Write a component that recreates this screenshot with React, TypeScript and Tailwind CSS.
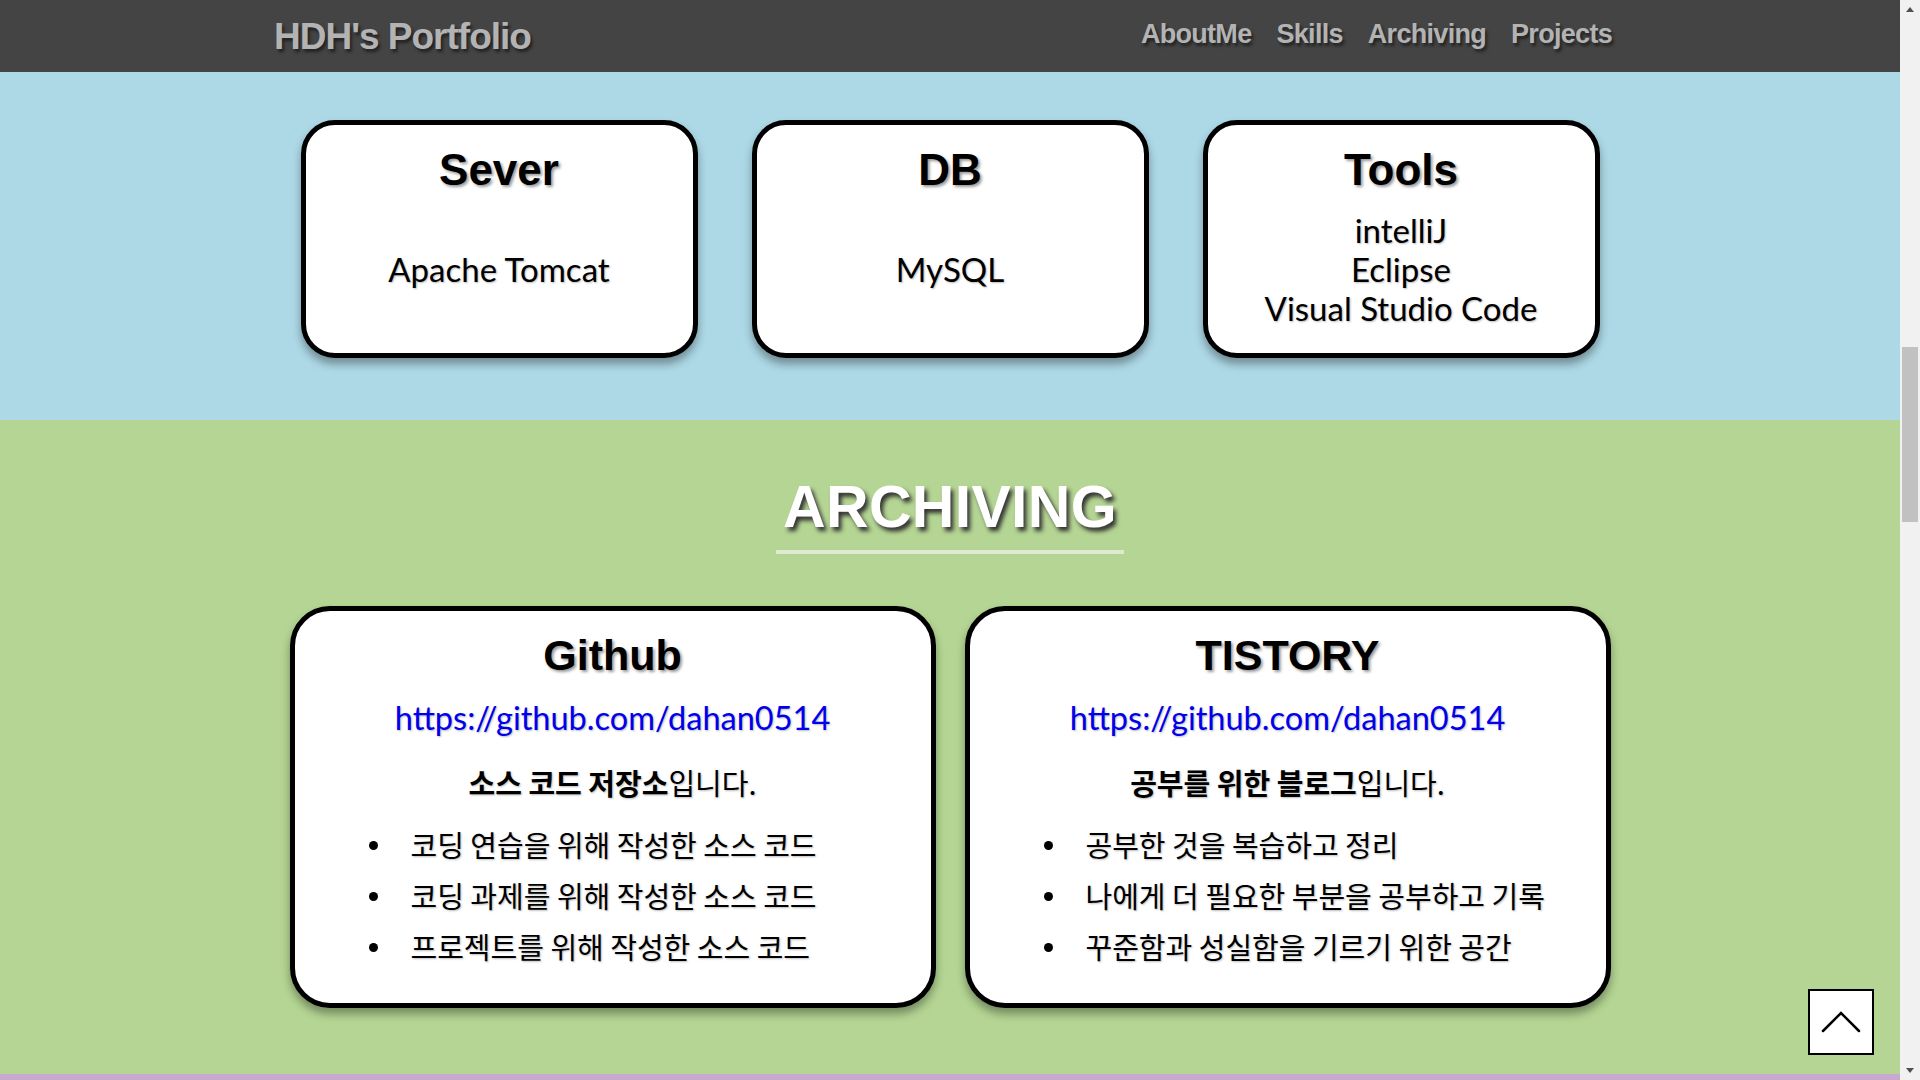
import React from 'react';

const latin = "font-['Lato','Noto_Sans_CJK_KR',sans-serif]";
const kr = "font-['Noto_Sans_CJK_KR','Lato',sans-serif]";
const head = "font-['Liberation_Sans','Noto_Sans_CJK_KR',sans-serif]";

const skills = [
  { title: 'Sever', items: ['Apache Tomcat'] },
  { title: 'DB', items: ['MySQL'] },
  { title: 'Tools', items: ['intelliJ', 'Eclipse', 'Visual Studio Code'] },
];

const archives = [
  {
    title: 'Github',
    link: 'https://github.com/dahan0514',
    bold: '소스 코드 저장소',
    items: ['코딩 연습을 위해 작성한 소스 코드', '코딩 과제를 위해 작성한 소스 코드', '프로젝트를 위해 작성한 소스 코드'],
  },
  {
    title: 'TISTORY',
    link: 'https://github.com/dahan0514',
    bold: '공부를 위한 블로그',
    items: ['공부한 것을 복습하고 정리', '나에게 더 필요한 부분을 공부하고 기록', '꾸준함과 성실함을 기르기 위한 공간'],
  },
];

const App = () => {
  return (
    <div className="relative flex h-[1080px] w-full overflow-hidden bg-white">
      <div className="flex min-w-0 flex-1 flex-col">
        {/* header */}
        <header className="flex h-[72px] shrink-0 items-center justify-between bg-[#444444] pl-[274px] pr-[288px]">
          <h1 className={`${head} pt-[2px] text-[37px] font-bold tracking-[-1px] text-[#b3b3b3] [text-shadow:2px_3px_3px_#222]`}>
            HDH's Portfolio
          </h1>
          <nav className="flex items-center gap-[25px] pb-[4px]">
            {['AboutMe', 'Skills', 'Archiving', 'Projects'].map((n) => (
              <a
                key={n}
                className={`${head} text-[27px] font-bold tracking-[-0.7px] text-[#b3b3b3] [text-shadow:2px_3px_3px_#222]`}
              >
                {n}
              </a>
            ))}
          </nav>
        </header>

        {/* skills (scrolled) */}
        <section className="flex h-[348px] shrink-0 justify-center gap-[54px] bg-[#add8e6] pt-[48px]">
          {skills.map((s) => (
            <div
              key={s.title}
              className="flex h-[238px] w-[397px] flex-col items-center rounded-[34px] border-[5px] border-black bg-white pb-[7px] pt-[23px] shadow-[0_6px_8px_rgba(0,0,0,0.35)]"
            >
              <h3 className={`${head} text-[44px] font-bold leading-none text-black [text-shadow:2px_2px_3px_#999]`}>
                {s.title}
              </h3>
              <div className="flex flex-1 flex-col items-center justify-center">
                {s.items.map((i) => (
                  <p key={i} className={`${latin} text-[33px] leading-[39px] text-black [text-shadow:1px_1px_2px_#bbb]`}>
                    {i}
                  </p>
                ))}
              </div>
            </div>
          ))}
        </section>

        {/* archiving */}
        <section className="flex flex-1 flex-col items-center bg-[#b4d593] pt-[58px]">
          <h2
            className={`${head} border-b-[4px] border-[#dcebcf] px-[7px] pb-[13px] text-[59px] font-bold leading-none tracking-[0.3px] text-white [text-shadow:3px_4px_4px_#333]`}
          >
            ARCHIVING
          </h2>
          <div className="mt-[52px] flex gap-[29px]">
            {archives.map((a) => (
              <div
                key={a.title}
                className="flex h-[402px] w-[646px] flex-col rounded-[40px] border-[5px] border-black bg-white pt-[23px] shadow-[0_6px_8px_rgba(0,0,0,0.35)]"
              >
                <h3 className={`${head} text-center text-[43px] font-bold leading-none text-black [text-shadow:2px_2px_3px_#999]`}>
                  {a.title}
                </h3>
                <a className={`${latin} mt-[25px] text-center text-[32.5px] leading-none text-[#0000ee] [text-shadow:1px_1px_2px_#bbb]`}>
                  {a.link}
                </a>
                <p className={`${kr} mt-[30px] text-center text-[29px] leading-[34px] text-black [text-shadow:1px_1px_2px_#bbb]`}>
                  <b>{a.bold}</b>입니다.
                </p>
                <ul className="mt-[21px] flex flex-col">
                  {a.items.map((i) => (
                    <li key={i} className="flex h-[51px] items-center pl-[74px]">
                      <span className="h-[9px] w-[9px] shrink-0 rounded-full bg-black" />
                      <span className={`${kr} ml-[33px] text-[29px] text-black [text-shadow:1px_1px_2px_#bbb]`}>{i}</span>
                    </li>
                  ))}
                </ul>
              </div>
            ))}
          </div>
        </section>
        <div className="h-[6px] shrink-0 bg-[#c9a8cf]" />
      </div>

      {/* scrollbar */}
      <div className="relative w-[20px] shrink-0 bg-[#f1f1f1]">
        <div className="absolute left-[6px] top-[7px] h-0 w-0 border-x-[4px] border-b-[5px] border-x-transparent border-b-[#505050]" />
        <div className="absolute left-[2px] top-[347px] h-[175px] w-[16px] bg-[#c1c1c1]" />
        <div className="absolute bottom-[7px] left-[6px] h-0 w-0 border-x-[4px] border-t-[5px] border-x-transparent border-t-[#505050]" />
      </div>

      {/* scroll to top */}
      <button className="absolute bottom-[25px] right-[46px] flex h-[66px] w-[66px] items-center justify-center border-[2px] border-black bg-white">
        <svg width="40" height="24" viewBox="0 0 40 24" fill="none" stroke="black" strokeWidth="2.5" strokeLinecap="round">
          <path d="M2 21 L20 3 L38 21" />
        </svg>
      </button>
    </div>
  );
};

export default App;
